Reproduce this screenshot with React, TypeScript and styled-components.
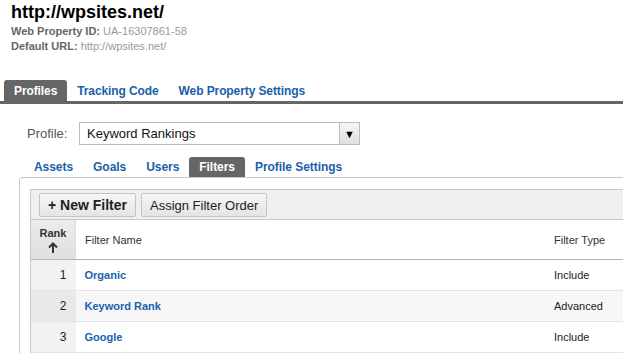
import { createGlobalStyle, styled } from 'styled-components';

const GlobalStyle = createGlobalStyle`
  html, body {
    margin: 0;
    padding: 0;
    background: #fff;
    overflow: hidden;
  }
  body {
    font-family: "Liberation Sans", Arial, sans-serif;
    color: #333;
  }
`;

const S = {
  page: styled.div`
    width: 100%;
    overflow: hidden;
  `,
  header: styled.div`
    padding-left: 11px;
  `,
  title: styled.h1`
    margin: 0;
    font-size: 18px;
    line-height: 24px;
    font-weight: bold;
    color: #000;
  `,
  meta: styled.div`
    font-size: 11px;
    line-height: 15px;
    color: #999;
    b {
      color: #666;
    }
  `,
  tabBar: styled.div`
    display: flex;
    margin-top: 26px;
    padding-left: 4px;
    border-bottom: 3px solid #666;
  `,
  tab: styled.div<{ $active?: boolean }>`
    height: 21px;
    line-height: 22px;
    padding: 0 10px;
    font-size: 12px;
    font-weight: bold;
    letter-spacing: -0.1px;
    border-radius: 3px 3px 0 0;
    color: ${({ $active }) => ($active ? '#fff' : '#1a5fa8')};
    background: ${({ $active }) => ($active ? '#666' : 'transparent')};
  `,
  profileRow: styled.div`
    display: flex;
    align-items: center;
    margin-top: 18px;
    padding-left: 27px;
  `,
  label: styled.span`
    width: 52px;
    font-size: 13px;
    color: #555;
  `,
  select: styled.div`
    display: flex;
    width: 279px;
    height: 21px;
    border: 1px solid #bbb;
    background: #fff;
  `,
  selectText: styled.div`
    flex: 1;
    padding-left: 7px;
    font-size: 13px;
    line-height: 21px;
    color: #111;
  `,
  selectArrow: styled.div`
    width: 19px;
    border-left: 1px solid #bbb;
    background: linear-gradient(#f6f6f6, #e0e0e0);
    display: flex;
    align-items: center;
    justify-content: center;
    font-size: 11px;
    color: #000;
  `,
  subTabs: styled.div`
    display: flex;
    margin-top: 12px;
    padding-left: 24px;
  `,
  subTab: styled.div<{ $active?: boolean }>`
    height: 20px;
    line-height: 21px;
    padding: 0 10px;
    font-size: 12px;
    font-weight: bold;
    letter-spacing: -0.05px;
    border-radius: 3px 3px 0 0;
    color: ${({ $active }) => ($active ? '#fff' : '#1a5fa8')};
    background: ${({ $active }) => ($active ? '#666' : 'transparent')};
  `,
  box: styled.div`
    margin-left: 19px;
    padding: 11px 0 0 10px;
    border: 1px solid #c8c8c8;
    border-right: none;
    border-bottom: none;
    border-radius: 4px 0 0 0;
  `,
  inner: styled.div`
    border-left: 1px solid #c8c8c8;
    border-top: 1px solid #c8c8c8;
  `,
  toolbar: styled.div`
    display: flex;
    gap: 5px;
    height: 30px;
    padding: 3px 0 0 8px;
    box-sizing: border-box;
    background: #efefef;
    border-bottom: 1px solid #c8c8c8;
  `,
  button: styled.button<{ $primary?: boolean }>`
    height: 24px;
    padding: 0 8px;
    border: 1px solid #c4c4c4;
    border-radius: 2px;
    background: linear-gradient(#f7f7f7, #e4e4e4);
    font-family: "Liberation Sans", Arial, sans-serif;
    font-size: ${({ $primary }) => ($primary ? '14px' : '13px')};
    font-weight: ${({ $primary }) => ($primary ? 'bold' : 'normal')};
    color: #222;
  `,
  table: styled.table`
    width: 100%;
    border-collapse: collapse;
    font-size: 11px;
  `,
  th: styled.th<{ $rank?: boolean; $width?: number }>`
    height: 39px;
    padding: 0 9px;
    text-align: left;
    font-weight: normal;
    color: #333;
    border-bottom: 1px solid #b4b4b4;
    background: #fff;
    ${({ $width }) => ($width ? `width: ${$width}px;` : '')}
    ${({ $rank }) =>
      $rank &&
      `
      width: 44px;
      padding: 0;
      text-align: center;
      font-weight: bold;
      line-height: 13px;
      background: linear-gradient(#ececec, #e0e0e0);
      border-right: 1px solid #dcdcdc;
    `}
  `,
  row: styled.tr<{ $alt?: boolean }>`
    background: ${({ $alt }) => ($alt ? '#f7f7f7' : '#fff')};
  `,
  rankCell: styled.td<{ $alt?: boolean }>`
    height: 30px;
    padding: 0 9px 0 0;
    text-align: right;
    color: #222;
    font-size: 12px;
    background: ${({ $alt }) => ($alt ? '#e9e9e9' : '#f2f2f2')};
    border-bottom: 1px solid #e4e4e4;
  `,
  nameCell: styled.td`
    padding: 0 9px;
    font-weight: bold;
    color: #1a62b0;
    border-bottom: 1px solid #e4e4e4;
  `,
  typeCell: styled.td`
    padding: 0 9px;
    color: #222;
    border-bottom: 1px solid #e4e4e4;
  `,
  arrow: styled.svg`
    display: block;
    margin: 2px auto 0;
  `,
};

const filters = [
  { rank: 1, name: 'Organic', type: 'Include' },
  { rank: 2, name: 'Keyword Rank', type: 'Advanced' },
  { rank: 3, name: 'Google', type: 'Include' },
];

export default function App() {
  return (
    <S.page>
      <GlobalStyle />
      <S.header>
        <S.title>http://wpsites.net/</S.title>
        <S.meta>
          <b>Web Property ID:</b> UA-16307861-58
        </S.meta>
        <S.meta>
          <b>Default URL:</b> http://wpsites.net/
        </S.meta>
      </S.header>

      <S.tabBar>
        <S.tab $active>Profiles</S.tab>
        <S.tab>Tracking Code</S.tab>
        <S.tab>Web Property Settings</S.tab>
      </S.tabBar>

      <S.profileRow>
        <S.label>Profile:</S.label>
        <S.select>
          <S.selectText>Keyword Rankings</S.selectText>
          <S.selectArrow>▼</S.selectArrow>
        </S.select>
      </S.profileRow>

      <S.subTabs>
        <S.subTab>Assets</S.subTab>
        <S.subTab>Goals</S.subTab>
        <S.subTab>Users</S.subTab>
        <S.subTab $active>Filters</S.subTab>
        <S.subTab>Profile Settings</S.subTab>
      </S.subTabs>

      <S.box>
        <S.inner>
          <S.toolbar>
            <S.button $primary>+ New Filter</S.button>
            <S.button>Assign Filter Order</S.button>
          </S.toolbar>
          <S.table>
            <thead>
              <tr>
                <S.th $rank>
                  Rank
                  <S.arrow width="10" height="11" viewBox="0 0 10 11">
                    <path d="M5 1.5V11M1 5.5L5 1.5L9 5.5" stroke="#333" strokeWidth="2" fill="none" />
                  </S.arrow>
                </S.th>
                <S.th $width={451}>Filter Name</S.th>
                <S.th>Filter Type</S.th>
              </tr>
            </thead>
            <tbody>
              {filters.map(f => (
                <S.row key={f.rank} $alt={f.rank % 2 === 0}>
                  <S.rankCell $alt={f.rank % 2 === 0}>{f.rank}</S.rankCell>
                  <S.nameCell>{f.name}</S.nameCell>
                  <S.typeCell>{f.type}</S.typeCell>
                </S.row>
              ))}
            </tbody>
          </S.table>
        </S.inner>
      </S.box>
    </S.page>
  );
}
